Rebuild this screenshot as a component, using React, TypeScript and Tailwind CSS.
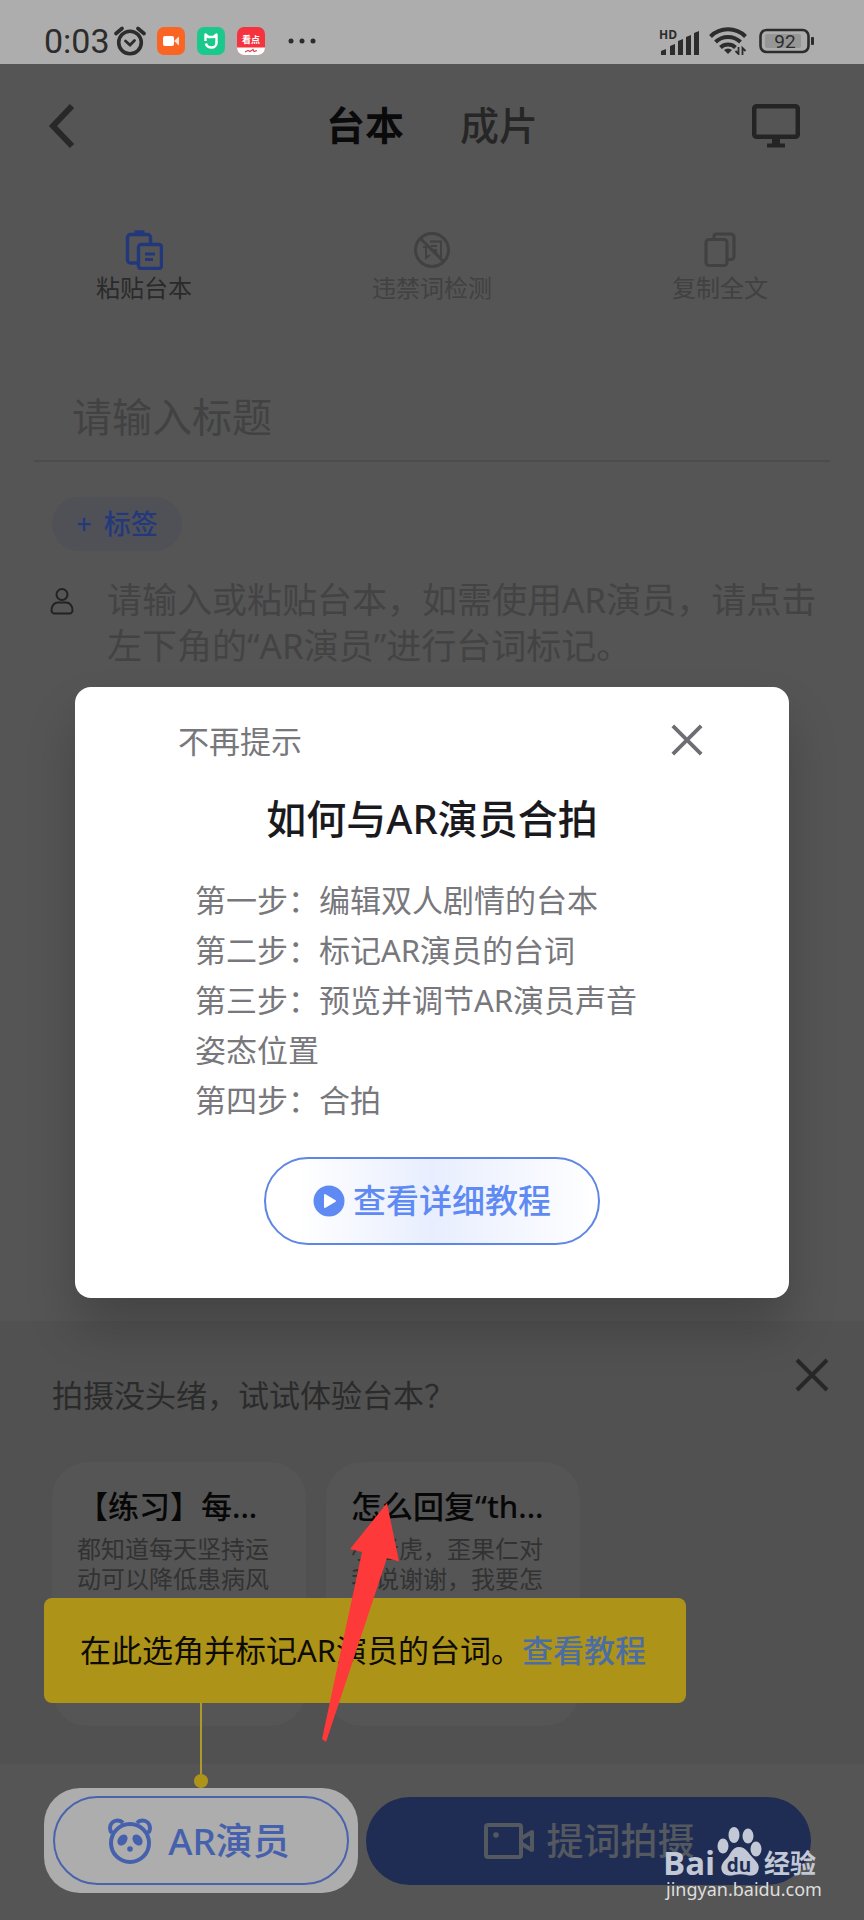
import { useState } from "react";

const steps = [
  "第一步：编辑双人剧情的台本",
  "第二步：标记AR演员的台词",
  "第三步：预览并调节AR演员声音姿态位置",
  "第四步：合拍",
];

const samples = [
  { title: "【练习】每...", lines: ["都知道每天坚持运", "动可以降低患病风"] },
  { title: "怎么回复“th...", lines: ["小老虎，歪果仁对", "我说谢谢，我要怎"] },
];

function CloseIcon({ className }: { className: string }) {
  return (
    <svg viewBox="0 0 36 36" className={className} fill="none" stroke="currentColor" strokeWidth="4">
      <path d="M3 3l30 30M33 3L3 33" />
    </svg>
  );
}

function StatusBar() {
  return (
    <header className="flex h-16 items-end justify-between bg-[#adadad] pr-[49px] pb-[7px] pl-11 text-[#2c2c2c]">
      <div className="flex items-center">
        <span className="font-['Roboto','Noto_Sans',sans-serif] text-[34px] leading-[32px]">0:03</span>
        {/* Alarm */}
        <svg viewBox="0 0 32 30" className="ml-1 h-[30px] w-8" fill="none" stroke="currentColor" strokeWidth="3.6" strokeLinecap="round">
          <circle cx="16" cy="16.5" r="11.3" />
          <path d="M2 7.5l6-5M30 7.5l-6-5" />
          <path d="M11.5 15l4.5 4 4.5-4.5" strokeWidth="2.8" />
        </svg>
        {/* Camera app */}
        <svg viewBox="0 0 28 28" className="ml-[11px] size-7">
          <rect width="28" height="28" rx="7" fill="#fb6523" />
          <rect x="6" y="9" width="11" height="10" rx="2" fill="#fff" />
          <path d="M17 14l5-4.5v9z" fill="#ffe2d2" />
        </svg>
        {/* Home app */}
        <svg viewBox="0 0 28 28" className="ml-3 size-7">
          <rect width="28" height="28" rx="7" fill="#1cc98c" />
          <path d="M8.5 14V7.5l3 2.5h5l3-2.5V14" fill="none" stroke="#fff" strokeWidth="2.4" strokeLinejoin="round" />
          <path d="M9 16.5a5.5 4.5 0 0 0 5.5 4 4.8 4.8 0 0 0 5-4.5v-2" fill="none" stroke="#fff" strokeWidth="2.6" />
        </svg>
        {/* News app */}
        <svg viewBox="0 0 28 28" className="ml-3 size-7">
          <rect width="28" height="28" rx="7" fill="#f7323f" />
          <path d="M0 20.5h28v.5a7 7 0 0 1-7 7H7a7 7 0 0 1-7-7z" fill="#fff" />
          <text x="14" y="15.5" textAnchor="middle" fontSize="9" fontWeight="700" fill="#fff" fontFamily="Noto Sans CJK SC, sans-serif">
            看点
          </text>
          <path d="M8 25l3-1.5 2 1 3-2 1 2 3-1" fill="none" stroke="#e0474f" strokeWidth="1.2" />
        </svg>
        <svg viewBox="0 0 28 6" className="ml-[23px] h-[6px] w-7" fill="currentColor">
          <circle cx="3" cy="3" r="2.5" />
          <circle cx="14" cy="3" r="2.5" />
          <circle cx="25" cy="3" r="2.5" />
        </svg>
      </div>
      <div className="flex items-center">
        {/* Signal */}
        <svg viewBox="0 -4 42 32" className="h-8 w-[42px]" fill="currentColor">
          <text x="1" y="10" fontSize="12" fontWeight="700" fontFamily="Open Sans, sans-serif">
            HD
          </text>
          <path d="M3 26v-4l5-2v6zM12 26V17l5-2v11zM20 26V12l5-2v16zM28 26V8l5-2v20zM36 26V4l5-2v24z" />
        </svg>
        {/* Wifi */}
        <svg viewBox="0 0 38 28" className="ml-[9px] h-7 w-[38px]" fill="none" stroke="currentColor" strokeWidth="4">
          <path d="M1.5 9.5a25 25 0 0 1 35 0" />
          <path d="M6.500 15a18 18 0 0 1 25 0" />
          <path d="M11.5 20.5a11 11 0 0 1 15 0" />
          <path d="M15 23a6 6 0 0 1 8 0l-4 4z" fill="currentColor" stroke="none" />
          <path d="M29.5 20v7l-3-3M33.5 28v-7l3 3" strokeWidth="1.8" />
        </svg>
        {/* Battery */}
        <svg viewBox="0 0 56 26" className="ml-3 h-[26px] w-14">
          <rect x="1.5" y="2" width="48" height="22" rx="6" fill="none" stroke="currentColor" strokeWidth="2.6" />
          <rect x="6" y="6" width="36" height="14" rx="2" fill="#969696" />
          <rect x="52" y="9" width="3" height="8" rx="1" fill="currentColor" />
          <text x="26" y="19.5" textAnchor="middle" fontSize="19" fill="currentColor" fontFamily="Roboto, sans-serif">
            92
          </text>
        </svg>
      </div>
    </header>
  );
}

function NavBar() {
  return (
    <nav className="grid h-[124px] grid-cols-3 items-center px-11">
      <button aria-label="返回" className="flex h-12 w-9 items-center text-[#282828]">
        <svg viewBox="0 0 36 48" className="h-12 w-9" fill="none" stroke="currentColor" strokeWidth="6">
          <path d="M28 4L9 24l19 20" />
        </svg>
      </button>
      <div className="flex justify-center gap-14 pb-[2px] text-[39px] leading-[48px] whitespace-nowrap">
        <button className="font-bold text-[#0a0a0a]">台本</button>
        <button className="font-medium text-[#262626]">成片</button>
      </div>
      <button aria-label="投屏" className="mr-5 justify-self-end text-[#242424]">
        <svg viewBox="0 0 48 44" className="h-11 w-12" fill="none" stroke="currentColor" strokeWidth="4.5">
          <rect x="2.2" y="2.2" width="43.6" height="30.6" rx="2.5" />
          <path d="M24 33v7" strokeWidth="8" />
          <path d="M15 41.5h18" strokeWidth="4" />
        </svg>
      </button>
    </nav>
  );
}

function ToolBar() {
  return (
    <div className="grid grid-cols-3 pt-[42px] text-[24px] leading-[30px] text-[#414141]">
      <button className="flex flex-col items-center gap-[3px] text-[#2a2a2a]">
        <svg viewBox="0 0 38 40" className="h-10 w-[38px]" fill="none" stroke="#23387c" strokeWidth="3.4">
          <path d="M13 33H5.500a3 3 0 0 1-3-3V7.500a3 3 0 0 1 3-3h17a3 3 0 0 1 3 3V14" />
          <path d="M9.5 2.8h10" strokeWidth="5" />
          <rect x="13.5" y="14.5" width="23" height="24" rx="2.5" />
          <path d="M20 24h10M20 29.5h8" strokeWidth="2.8" />
        </svg>
        粘贴台本
      </button>
      <button className="flex flex-col items-center gap-[3px]">
        <svg viewBox="0 0 40 40" className="size-10" fill="none" stroke="currentColor" strokeWidth="3">
          <circle cx="20" cy="20" r="16.5" />
          <path d="M9 9l22 22" />
          <path d="M18 11.5h11V27M19 16h6M19.5 20h4.500v4.500M11 17h3v11l4-3" strokeWidth="2" />
        </svg>
        违禁词检测
      </button>
      <button className="flex flex-col items-center gap-[3px]">
        <svg viewBox="0 0 34 40" className="h-10 w-[34px]" fill="none" stroke="currentColor" strokeWidth="3.2">
          <rect x="3" y="9.5" width="21" height="26" rx="3" />
          <path d="M11 9V6.500a2.500 2.500 0 0 1 2.500-2.500H28a3 3 0 0 1 3 3v19.500a3 3 0 0 1-3 3h-3.500" />
        </svg>
        复制全文
      </button>
    </div>
  );
}

function Editor() {
  return (
    <main className="flex flex-1 flex-col">
      <div className="mx-[34px] mt-[69px] border-b-2 border-[#4c4c4c]">
        <input
          aria-label="标题"
          placeholder="请输入标题"
          className="block h-[88px] w-full bg-transparent px-[38px] text-[40px] text-[#222] outline-none placeholder:text-[#424243]"
        />
      </div>
      <button className="mt-[35px] ml-[52px] flex h-[54px] w-[130px] items-center justify-center gap-3 rounded-full bg-[#505157] text-[27px] font-medium text-[#24397c]">
        <span>+</span>
        <span>标签</span>
      </button>
      <div className="mt-[26px] flex flex-1 items-start gap-[33px] pr-[30px] pl-[50px]">
        <svg viewBox="0 0 24 28" className="mt-[10px] h-7 w-6 shrink-0" fill="none" stroke="#222" strokeWidth="2">
          <circle cx="12" cy="7.5" r="5.5" />
          <path d="M4.500 26.500h15a3 3 0 0 0 3-3c0-5-3-8-6.500-8H8c-3.500 0-6.500 3-6.500 8a3 3 0 0 0 3 3z" />
        </svg>
        <textarea
          aria-label="台本内容"
          placeholder="请输入或粘贴台本，如需使用AR演员，请点击左下角的“AR演员”进行台词标记。"
          className="min-h-[200px] flex-1 resize-none self-stretch bg-transparent text-[35px] leading-[46px] text-[#222] outline-none placeholder:text-[#434344]"
        />
      </div>
    </main>
  );
}

function SamplePanel() {
  return (
    <section className="bg-[#515151] px-[52px] pt-[34px] pb-[38px]">
      <div className="flex items-start justify-between">
        <h2 className="pt-5 text-[31px] leading-10 text-[#2b2b2b]">拍摄没头绪，试试体验台本？</h2>
        <button aria-label="关闭" className="-mr-5 p-[2px] text-[#272727]">
          <CloseIcon className="size-9" />
        </button>
      </div>
      <div className="mt-[47px] flex gap-5">
        {samples.map((sample) => (
          <article key={sample.title} className="min-h-[264px] w-[254px] rounded-[36px] bg-[#555] px-[25px] pt-6">
            <h3 className="text-[31px] leading-10 font-medium whitespace-nowrap text-[#070707]">{sample.title}</h3>
            <p className="mt-2 text-[24px] leading-[30px] whitespace-nowrap text-[#323232]">
              {sample.lines.map((line) => (
                <span key={line} className="block">
                  {line}
                </span>
              ))}
            </p>
          </article>
        ))}
      </div>
    </section>
  );
}

function GuideTip() {
  return (
    <div className="absolute bottom-full left-0 w-[642px]">
      <p className="flex h-[105px] items-center rounded-lg bg-[#ad9418] px-9 text-[31px] font-normal whitespace-nowrap text-[#0d0b02]">
        在此选角并标记AR演员的台词。
        <a href="#tutorial" className="font-medium text-[#4a6da6]">
          查看教程
        </a>
      </p>
      <div className="flex w-[314px] flex-col items-center">
        <span className="h-[71px] w-[2px] bg-[#ad9a2c]" />
        <span className="size-[14px] rounded-full bg-[#ad9418]" />
      </div>
    </div>
  );
}

function BottomBar() {
  return (
    <footer className="flex items-center gap-2 bg-[#555] pt-6 pr-[53px] pb-[27px] pl-11 text-[37px] font-medium">
      <div className="relative w-[314px] rounded-[36px] bg-[#adadad] px-[9px] py-2">
        <GuideTip />
        <button className="flex h-[89px] w-full items-center justify-center gap-4 rounded-full border-2 border-[#4b63ad] pr-1 text-[#4560ac]">
          <svg viewBox="0 0 44 46" className="h-[46px] w-11" fill="none" stroke="currentColor" strokeWidth="4">
            <path d="M4 15A6.500 6.500 0 1 1 15 4.800M29 4.800A6.500 6.500 0 1 1 40 15" />
            <circle cx="22" cy="25" r="19" />
            <ellipse cx="14.5" cy="22" rx="4.5" ry="6" transform="rotate(35 14.5 22)" fill="currentColor" stroke="none" />
            <ellipse cx="29.5" cy="22" rx="4.5" ry="6" transform="rotate(-35 29.5 22)" fill="currentColor" stroke="none" />
            <circle cx="22" cy="31" r="2.8" fill="currentColor" stroke="none" />
          </svg>
          AR演员
        </button>
      </div>
      <button className="flex h-[88px] flex-1 items-center justify-center gap-3 rounded-full bg-[#1f2d54] text-[#54585f]">
        <svg viewBox="0 0 52 36" className="h-9 w-[52px]" fill="none" stroke="currentColor" strokeWidth="4">
          <rect x="3" y="2" width="35" height="32" rx="2" />
          <circle cx="13" cy="12" r="2.8" fill="currentColor" stroke="none" />
          <path d="M39 15l10-6v18l-10-6" strokeLinejoin="round" />
        </svg>
        提词拍摄
      </button>
    </footer>
  );
}

function HelpDialog({ onClose }: { onClose: () => void }) {
  return (
    <div className="absolute inset-x-0 top-16 bottom-0 flex items-center justify-center px-[75px]">
      <div
        role="dialog"
        aria-labelledby="help-title"
        className="w-full rounded-2xl bg-white pb-[53px] text-[31px] text-[#77777c] shadow-[0_30px_50px_0_rgba(0,0,0,0.2)]"
      >
        <div className="flex items-start justify-between pt-8 pr-[85px] pl-[103px]">
          <button className="leading-[44px]">不再提示</button>
          <button aria-label="关闭" onClick={onClose} className="mt-1 text-[#6d6d73]">
            <CloseIcon className="size-[34px]" />
          </button>
        </div>
        <h1 id="help-title" className="mt-7 text-center text-[40px] leading-[56px] font-medium text-[#1a1a1e]">
          如何与AR演员合拍
        </h1>
        <ol className="mt-7 pr-[126px] pl-[120px] leading-[50px]">
          {steps.map((step) => (
            <li key={step}>{step}</li>
          ))}
        </ol>
        <button className="mx-auto mt-8 flex h-[88px] w-[336px] items-center justify-center gap-2 rounded-full border-2 border-[#5f86e6] bg-linear-to-r from-white from-10% via-[#e8eefe] to-white text-[33px] font-medium text-[#5f8af4]">
          <svg viewBox="0 0 32 32" className="size-8">
            <circle cx="16" cy="16" r="15.5" fill="currentColor" />
            <path d="M12 10v12l10-6z" fill="#fff" stroke="#fff" strokeWidth="2" strokeLinejoin="round" />
          </svg>
          查看详细教程
        </button>
      </div>
    </div>
  );
}

function Pointer() {
  return (
    <svg viewBox="0 0 78 240" className="pointer-events-none absolute bottom-[177px] left-[322px] h-[240px] w-[78px]">
      <path d="M65 0L77 58.500 65 55 4 239 0 236 40 49 28 46z" fill="#fe3939" />
    </svg>
  );
}

function Watermark() {
  return (
    <svg viewBox="0 0 168 80" className="pointer-events-none absolute right-[34px] bottom-[14px] h-20 w-[168px]" fill="#c3c8d6">
      <text x="1" y="49" fontSize="33" fontWeight="700" fontFamily="Open Sans, sans-serif">
        Bai
      </text>
      <ellipse cx="61" cy="20" rx="5.5" ry="7.5" />
      <ellipse cx="72" cy="9" rx="5.5" ry="8" />
      <ellipse cx="86" cy="10" rx="5.5" ry="7.5" />
      <ellipse cx="94" cy="23" rx="5.5" ry="7.5" />
      <path d="M77 21c7 0 9 6 14 11s7 8 5 13-7 5-11 4-9-1-13 0-10 1-12-4 1-9 5-13 5-11 12-11z" />
      <text x="77" y="46" textAnchor="middle" fontSize="19" fontWeight="700" fill="#1f2d54" fontFamily="Open Sans, sans-serif">
        du
      </text>
      <text x="102" y="47" fontSize="26" fontWeight="700" fontFamily="Noto Sans CJK SC, sans-serif">
        经验
      </text>
      <text x="4" y="70" fontSize="18" fill="#dedede" fontFamily="Noto Sans, sans-serif">
        jingyan.baidu.com
      </text>
    </svg>
  );
}

export default function App() {
  const [helpOpen, setHelpOpen] = useState(true);

  return (
    <div className="relative flex min-h-screen flex-col overflow-hidden bg-[#555] font-['Noto_Sans','Noto_Sans_CJK_SC',sans-serif]">
      <StatusBar />
      <NavBar />
      <ToolBar />
      <Editor />
      <SamplePanel />
      <BottomBar />
      {helpOpen && <HelpDialog onClose={() => setHelpOpen(false)} />}
      <Pointer />
      <Watermark />
    </div>
  );
}
